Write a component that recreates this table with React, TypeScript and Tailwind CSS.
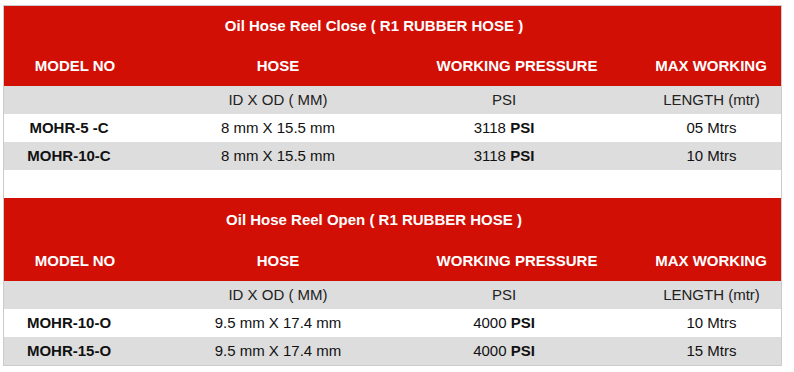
import React from "react";

type Row = { model: string; hose: string; psi: string; len: string };

const tables: { title: string; titleH: string; headH: string; rows: Row[] }[] = [
  {
    title: "Oil Hose Reel Close ( R1 RUBBER HOSE )",
    titleH: "h-[40px]",
    headH: "h-[40px]",
    rows: [
      { model: "MOHR-5 -C", hose: "8 mm X 15.5 mm", psi: "3118", len: "05 Mtrs" },
      { model: "MOHR-10-C", hose: "8 mm X 15.5 mm", psi: "3118", len: "10 Mtrs" },
    ],
  },
  {
    title: "Oil Hose Reel Open ( R1 RUBBER HOSE )",
    titleH: "h-[44px]",
    headH: "h-[39px]",
    rows: [
      { model: "MOHR-10-O", hose: "9.5 mm X 17.4 mm", psi: "4000", len: "10 Mtrs" },
      { model: "MOHR-15-O", hose: "9.5 mm X 17.4 mm", psi: "4000", len: "15 Mtrs" },
    ],
  },
];

const grid = "grid grid-cols-[142px_264px_214px_157px] items-center";

function Table({ t }: { t: (typeof tables)[number] }) {
  return (
    <div className="bg-[#d20f05]">
      <div className={`${t.titleH} flex items-center justify-center pr-[37px] text-white font-bold text-[15px]`}>
        {t.title}
      </div>
      <div className={`${grid} ${t.headH} text-white font-bold text-[15px] text-center`}>
        <div>MODEL NO</div>
        <div>HOSE</div>
        <div>WORKING PRESSURE</div>
        <div className="pl-[17px]">MAX WORKING</div>
      </div>
      <div className={`${grid} h-[28px] bg-[#dddddd] text-[#222] text-[15px] text-center`}>
        <div></div>
        <div>ID X OD ( MM)</div>
        <div className="pr-[26px]">PSI</div>
        <div className="pl-[18px]">LENGTH (mtr)</div>
      </div>
      {t.rows.map((r, i) => (
        <div
          key={r.model}
          className={`${grid} h-[28px] ${i % 2 === 0 ? "bg-white" : "bg-[#dddddd]"} text-[#111] text-[15px] text-center`}
        >
          <div className="pr-[12px] font-bold">{r.model}</div>
          <div>{r.hose}</div>
          <div className="pr-[26px]">
            {r.psi} <span className="font-bold">PSI</span>
          </div>
          <div className="pl-[18px]">{r.len}</div>
        </div>
      ))}
    </div>
  );
}

export default function App() {
  return (
    <div className="w-[794px] h-[372px] bg-white pl-[3px] pt-[5px]" style={{ fontFamily: '"Liberation Sans", Arial, sans-serif' }}>
      <div className="w-[779px] border border-[#cccccc]">
        <Table t={tables[0]} />
        <div className="h-[28px] bg-white"></div>
        <Table t={tables[1]} />
      </div>
    </div>
  );
}
